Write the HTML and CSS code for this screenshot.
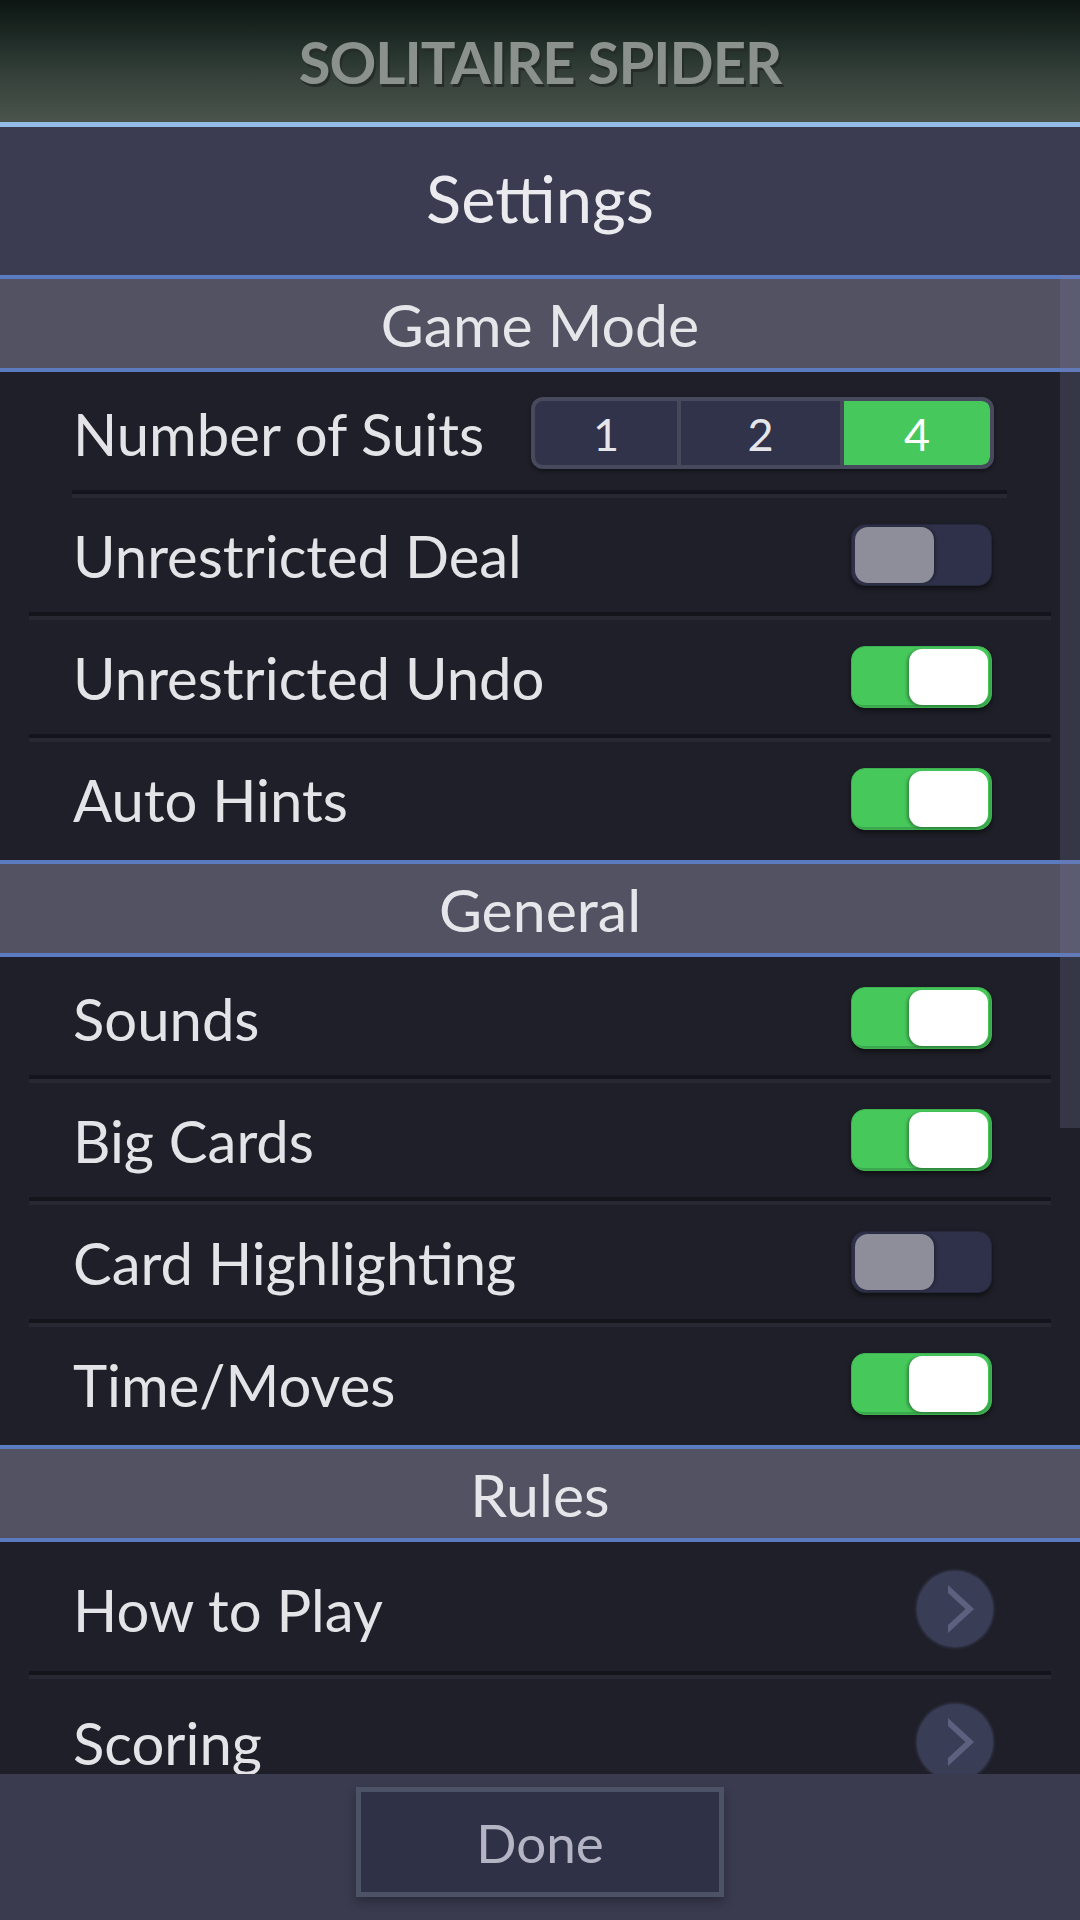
FILE: index.html
```html
<!DOCTYPE html>
<html lang="en">
<head>
<meta charset="utf-8">
<title>Solitaire Spider - Settings</title>
<link rel="stylesheet" href="styles.css">
</head>
<body>
<div class="app">
  <header class="topbar">
    <h1 class="app-title">SOLITAIRE SPIDER</h1>
  </header>
  <div class="page-title"><span class="txt">Settings</span></div>

  <main class="scroll">
    <section class="section">
      <div class="sec-head"><span class="txt">Game Mode</span></div>
      <div class="list">
        <div class="row">
          <span class="label">Number of Suits</span>
          <div class="segmented">
            <span class="seg">1</span>
            <span class="seg">2</span>
            <span class="seg seg-on">4</span>
          </div>
        </div>
        <div class="sep sep-inset"></div>
        <div class="row">
          <span class="label">Unrestricted Deal</span>
          <span class="toggle"><span class="knob"></span></span>
        </div>
        <div class="sep"></div>
        <div class="row">
          <span class="label">Unrestricted Undo</span>
          <span class="toggle on"><span class="knob"></span></span>
        </div>
        <div class="sep"></div>
        <div class="row">
          <span class="label">Auto Hints</span>
          <span class="toggle on"><span class="knob"></span></span>
        </div>
      </div>
    </section>

    <section class="section">
      <div class="sec-head"><span class="txt">General</span></div>
      <div class="list">
        <div class="row">
          <span class="label">Sounds</span>
          <span class="toggle on"><span class="knob"></span></span>
        </div>
        <div class="sep"></div>
        <div class="row">
          <span class="label">Big Cards</span>
          <span class="toggle on"><span class="knob"></span></span>
        </div>
        <div class="sep"></div>
        <div class="row">
          <span class="label">Card Highlighting</span>
          <span class="toggle"><span class="knob"></span></span>
        </div>
        <div class="sep"></div>
        <div class="row">
          <span class="label">Time/Moves</span>
          <span class="toggle on"><span class="knob"></span></span>
        </div>
      </div>
    </section>

    <section class="section">
      <div class="sec-head"><span class="txt">Rules</span></div>
      <div class="list">
        <div class="row row-tall">
          <span class="label">How to Play</span>
          <span class="chev">
            <svg viewBox="0 0 76 76" width="76" height="76"><polygon points="31,14 57,38 31,62 31,54 48.5,38 31,22"/></svg>
          </span>
        </div>
        <div class="sep"></div>
        <div class="row row-tall">
          <span class="label">Scoring</span>
          <span class="chev">
            <svg viewBox="0 0 76 76" width="76" height="76"><polygon points="31,14 57,38 31,62 31,54 48.5,38 31,22"/></svg>
          </span>
        </div>
      </div>
    </section>

    <div class="scrollbar"></div>
  </main>

  <footer class="footer">
    <button class="done"><span class="txt">Done</span></button>
  </footer>
</div>
</body>
</html>
```

FILE: styles.css
```css
* { box-sizing: border-box; }

html, body {
  margin: 0;
  padding: 0;
  width: 1080px;
  height: 1920px;
  overflow: hidden;
  background: #1f1f29;
  font-family: "Lato", "Noto Sans", "Liberation Sans", sans-serif;
}

.app {
  width: 1080px;
  height: 1920px;
  display: flex;
  flex-direction: column;
}

.txt {
  display: block;
  padding-top: 1px;
}

/* Top bar */
.topbar {
  height: 127px;
  flex: none;
  background: linear-gradient(to bottom, #0c1512 0%, #1e2a25 30%, #36423b 65%, #4a544d 100%);
  border-bottom: 5px solid #93bce6;
  display: flex;
  align-items: center;
  justify-content: center;
}

.app-title {
  margin: 0;
  font-size: 58px;
  font-weight: 700;
  letter-spacing: -1px;
  color: #8b918d;
  text-shadow: 2px 3px 0 #262d29;
}

.page-title {
  height: 148px;
  flex: none;
  padding-bottom: 7px;
  background: #3b3c52;
  display: flex;
  align-items: center;
  justify-content: center;
  color: #ebebef;
  font-size: 65px;
}

/* Scroll area */
.scroll {
  flex: 1;
  position: relative;
  overflow: hidden;
}

.sec-head {
  height: 97px;
  background: #525263;
  border-top: 4px solid #5b7bc0;
  border-bottom: 4px solid #5b7bc0;
  display: flex;
  align-items: center;
  justify-content: center;
  color: #e6e6ea;
  font-size: 59px;
}

.list {
  padding: 4px 0;
  background: #1f1f29;
}

.row {
  height: 114px;
  display: flex;
  align-items: center;
  justify-content: space-between;
  padding: 0 88px 0 73px;
}

.row-tall { height: 125px; }

.label {
  padding-top: 1px;
  color: #e4e4e8;
  font-size: 58px;
}

.sep {
  height: 8px;
  margin: 0 29px;
  background: #282833;
  border-top: 4px solid #14141c;
}

.sep-inset {
  margin: 0 73px 0 72px;
}

/* Segmented control */
.segmented {
  width: 463px;
  height: 72px;
  margin-right: -2px;
  border: 4px solid #464a5c;
  border-radius: 12px;
  background: #30334a;
  display: grid;
  grid-template-columns: 142px 163px 150px;
  overflow: hidden;
  box-shadow: 0 2px 4px rgba(0, 0, 0, 0.45);
}

.seg {
  display: flex;
  align-items: center;
  justify-content: center;
  color: #e6e6ea;
  font-size: 45px;
  padding-top: 1px;
}

.seg + .seg {
  border-left: 4px solid #454858;
}

.seg-on {
  background: #46c85c;
  color: #ffffff;
  border-left-width: 3px;
  border-radius: 0 8px 8px 0;
}

/* Toggles */
.toggle {
  width: 141px;
  height: 62px;
  border-radius: 14px;
  background: #2e3149;
  border: 1px solid #25283b;
  padding: 2px 3px;
  display: flex;
  justify-content: flex-start;
  box-shadow: 0 3px 5px rgba(0, 0, 0, 0.5);
}

.knob {
  width: 79px;
  height: 56px;
  border-radius: 13px;
  background: #8e8d9a;
  box-shadow: 2px 0 3px rgba(0, 0, 0, 0.25);
}

.toggle.on {
  background: #46c85a;
  border-color: #3eb150;
  justify-content: flex-end;
  box-shadow: inset -2px -2px 0 #3ba84d, 0 3px 5px rgba(0, 0, 0, 0.5);
}

.toggle.on .knob {
  background: #ffffff;
  box-shadow: -2px 1px 3px rgba(0, 0, 0, 0.3);
}

/* Chevron buttons */
.chev {
  width: 76px;
  height: 76px;
  margin-right: -1px;
  border-radius: 50%;
  background: #393d55;
  box-shadow: 0 0 3px 1px #393d55;
  display: flex;
}

.chev polygon {
  fill: #5d6180;
}

/* Scrollbar overlay */
.scrollbar {
  position: absolute;
  top: 0;
  right: 0;
  width: 20px;
  height: 853px;
  background: rgba(120, 125, 160, 0.25);
}

/* Footer */
.footer {
  height: 146px;
  flex: none;
  background: #3a3b4f;
  display: flex;
  justify-content: center;
  align-items: flex-start;
  padding-top: 13px;
}

.done {
  width: 368px;
  height: 110px;
  margin: 0;
  padding: 0;
  border: 5px solid #4d5366;
  background: #2f3247;
  color: #b4b4c4;
  font-family: inherit;
  font-size: 53px;
  box-shadow: 0 5px 10px rgba(0, 0, 0, 0.3);
  display: flex;
  align-items: center;
  justify-content: center;
}
```
